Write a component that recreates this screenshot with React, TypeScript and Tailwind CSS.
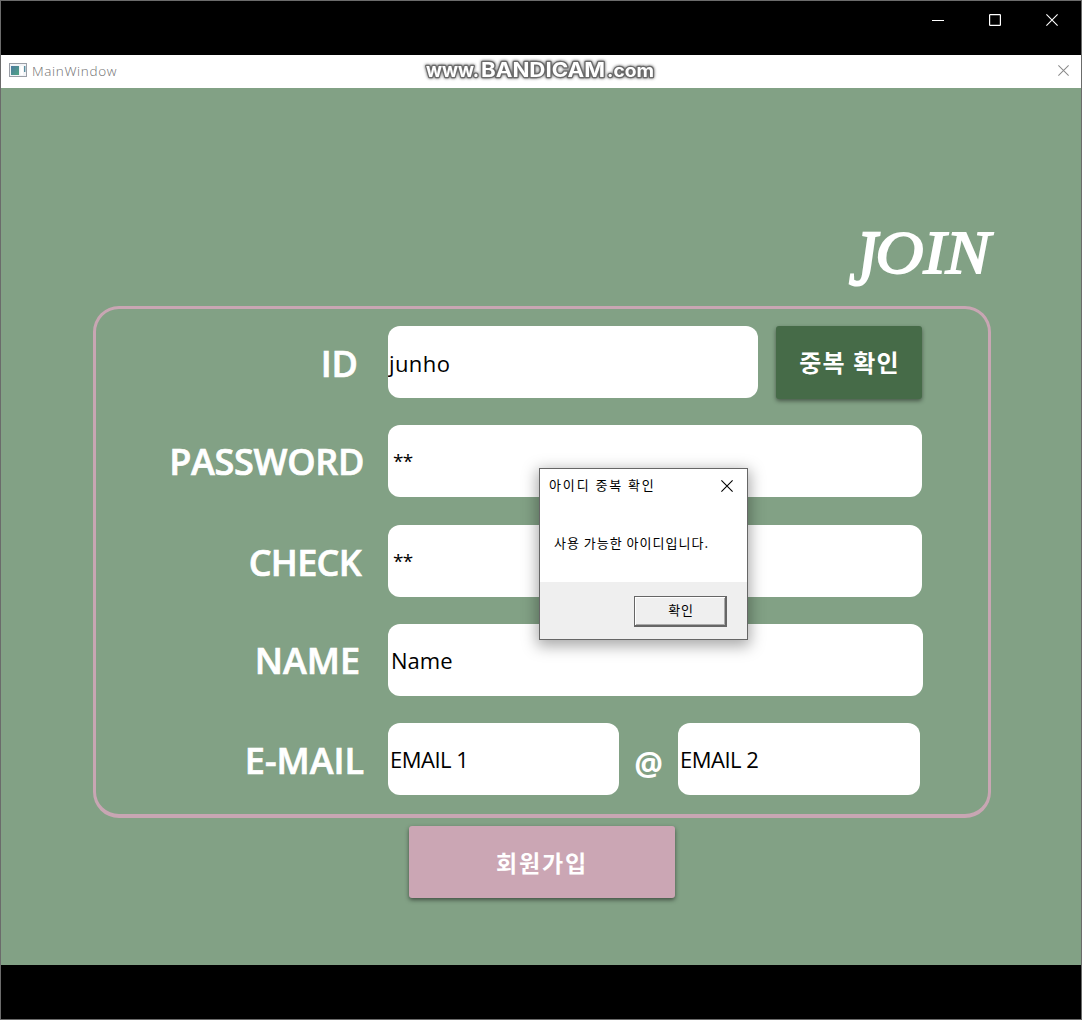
import type { ReactNode } from "react";

function CloseIcon({ size, className }: { size: number; className: string }) {
  return (
    <svg width={size} height={size} viewBox="0 0 12 12" className={className} fill="none" stroke="currentColor">
      <path d="M0.4 0.4 11.6 11.6M11.6 0.4 0.4 11.6" strokeWidth="1.1" />
    </svg>
  );
}

function RecorderBar() {
  return (
    <header className="flex h-[54px] items-start justify-end bg-black pt-[13px] pr-[23px] text-white">
      <svg width="12" height="12" viewBox="0 0 12 12" className="mr-[45px]">
        <path d="M0 6.5H12" stroke="currentColor" />
      </svg>
      <svg width="12" height="12" viewBox="0 0 12 12" className="mr-[45px]" fill="none">
        <rect x="0.6" y="0.6" width="10.8" height="10.8" rx="0.6" stroke="currentColor" strokeWidth="1.2" />
      </svg>
      <CloseIcon size={12} className="text-white" />
    </header>
  );
}

function Watermark() {
  return (
    <svg
      width="240"
      height="32"
      viewBox="0 0 240 32"
      className="absolute top-0 left-[417px] font-['Inter','Liberation_Sans',sans-serif] drop-shadow-[0_0_1.5px_rgba(60,60,60,0.9)]"
    >
      <g fill="#fff" stroke="#6a6a6a" strokeWidth="2.4" strokeLinejoin="round" paintOrder="stroke">
        <text x="8" y="22" fontSize="19" fontWeight="700" textLength="53" lengthAdjust="spacingAndGlyphs">www.</text>
        <text x="63" y="22" fontSize="20" fontWeight="700" textLength="124" lengthAdjust="spacingAndGlyphs">BANDICAM</text>
        <text x="189" y="22" fontSize="18" fontWeight="700" textLength="47" lengthAdjust="spacingAndGlyphs">.com</text>
      </g>
    </svg>
  );
}

function TitleBar() {
  return (
    <div className="relative flex h-[33px] items-center bg-white pr-[12px] pl-[8px]">
      <svg width="18" height="14" viewBox="0 0 18 14" className="mb-[3px]">
        <defs>
          <linearGradient id="pane" x1="0" y1="0" x2="1" y2="1">
            <stop offset="0" stopColor="#4d79a0" />
            <stop offset="1" stopColor="#4fa583" />
          </linearGradient>
        </defs>
        <rect x="0.5" y="0.5" width="17" height="13" fill="#f2f4f7" stroke="#9a9ea6" />
        <rect x="2" y="3" width="8" height="9" fill="url(#pane)" />
        <rect x="11.5" y="3" width="2.5" height="9" fill="#fff" />
        <rect x="15" y="3" width="1.4" height="6" fill="#5b8fa0" />
      </svg>
      <span className="ml-[5px] text-[13.5px] leading-none font-light tracking-[0.65px] text-[#707070]">MainWindow</span>
      <Watermark />
      <CloseIcon size={11} className="mb-[2px] ml-auto text-[#8a8a8a]" />
    </div>
  );
}

function Row({ label, labelClass, className, children }: { label: string; labelClass: string; className: string; children: ReactNode }) {
  return (
    <div className={`flex h-[72px] ${className}`}>
      <div className={`flex w-[292px] shrink-0 items-center justify-end text-[36px] leading-none font-semibold whitespace-nowrap text-white [-webkit-text-stroke:0.7px_white] ${labelClass}`}>
        {label}
      </div>
      {children}
    </div>
  );
}

function Field({ className, children }: { className: string; children: ReactNode }) {
  return (
    <div className={`flex shrink-0 items-center overflow-hidden rounded-[12px] bg-white leading-none whitespace-nowrap text-black ${className}`}>
      <span>{children}</span>
    </div>
  );
}

function Dialog() {
  return (
    <div className="absolute top-[467px] left-[538px] flex h-[172px] w-[209px] flex-col border border-[#666] bg-white text-[13px] leading-none text-black shadow-[0_4px_14px_2px_rgba(0,0,0,0.34)]">
      <div className="flex h-[33px] items-center justify-between pr-[14px] pl-[9px]">
        <span className="pb-[2px] font-['Noto_Sans_CJK_KR',sans-serif] tracking-[1.9px]">아이디 중복 확인</span>
        <CloseIcon size={12} className="mt-[1px] text-black" />
      </div>
      <div className="flex flex-1 items-center pl-[14px]">
        <span className="font-['Noto_Sans_CJK_KR',sans-serif] tracking-[1px]">사용 가능한 아이디입니다.</span>
      </div>
      <div className="flex h-[57px] items-start justify-end bg-[#efefef] pt-[14px] pr-[20px]">
        <button className="flex h-[31px] w-[93px] items-center justify-center border-t border-r-2 border-b-2 border-l border-[#666] bg-[#efefef] pb-[2px] pl-[2px] tracking-[0.8px] shadow-[inset_1px_1px_0_#fff,inset_-1px_-1px_0_#aaa]">
          확인
        </button>
      </div>
    </div>
  );
}

export default function App() {
  return (
    <div className="relative flex h-[1020px] w-[1082px] flex-col overflow-hidden border border-[#6b6b6b] bg-black font-['Open_Sans','Noto_Sans_CJK_KR',sans-serif]">
      <RecorderBar />
      <TitleBar />
      <main className="flex h-[877px] flex-col bg-[#82a185]">
        <h1 className="mt-[122px] mr-[91px] flex h-[84px] items-center justify-end font-['Liberation_Serif',serif] text-[61px] leading-none text-white italic [-webkit-text-stroke:1.8px_white]">
          <span className="mr-[8px] inline-block origin-[100%_18%] scale-x-[1.05] scale-y-[1.28]">J</span>
          <span className="inline-block origin-right scale-x-[1.09]">OIN</span>
        </h1>
        <section className="mt-[12px] ml-[92px] h-[512px] w-[898px] rounded-[26px] border-[3px] border-b-4 border-[#c8a6b3] pt-[17px]">
          <Row label="ID" labelClass="pr-[30px] pt-[4px]" className="">
            <Field className="w-[370px] pl-[1px] pt-[2px] text-[22px] tracking-[0.4px]">junho</Field>
            <button className="ml-[18px] flex h-[73px] w-[146px] items-center justify-center rounded-[3px] bg-[#466b48] pl-[1px] text-[24px] font-bold tracking-[1.2px] text-white shadow-[0_2px_4px_rgba(0,0,0,0.45)]">
              중복 확인
            </button>
          </Row>
          <Row label="PASSWORD" labelClass="pr-[24px] pt-[2px] tracking-[-0.3px]" className="mt-[27px]">
            <Field className="w-[534px] pl-[5px] text-[19px] tracking-[-0.6px]">**</Field>
          </Row>
          <Row label="CHECK" labelClass="pr-[27px] pt-[4px] tracking-[-0.7px]" className="mt-[28px]">
            <Field className="w-[534px] pl-[5px] text-[19px] tracking-[-0.6px]">**</Field>
          </Row>
          <Row label="NAME" labelClass="pr-[28px] pt-[2px]" className="mt-[27px]">
            <Field className="w-[535px] pl-[3px] text-[22px]">Name</Field>
          </Row>
          <Row label="E-MAIL" labelClass="pr-[24px] pt-[4px]" className="mt-[27px]">
            <Field className="w-[231px] pl-[2px] text-[22px] tracking-[-0.5px]">EMAIL 1</Field>
            <div className="flex w-[59px] items-center justify-center pt-[8px] text-[32px] leading-none font-bold text-white">@</div>
            <Field className="w-[242px] pl-[2px] text-[22px] tracking-[-0.5px]">EMAIL 2</Field>
          </Row>
        </section>
        <button className="mt-[8px] ml-[408px] flex h-[72px] w-[266px] items-center justify-center rounded-[3px] bg-[#cba6b4] pt-[2px] text-[23px] font-bold tracking-[1.9px] text-white shadow-[0_2px_4px_rgba(0,0,0,0.5)]">
          회원가입
        </button>
      </main>
      <Dialog />
    </div>
  );
}
